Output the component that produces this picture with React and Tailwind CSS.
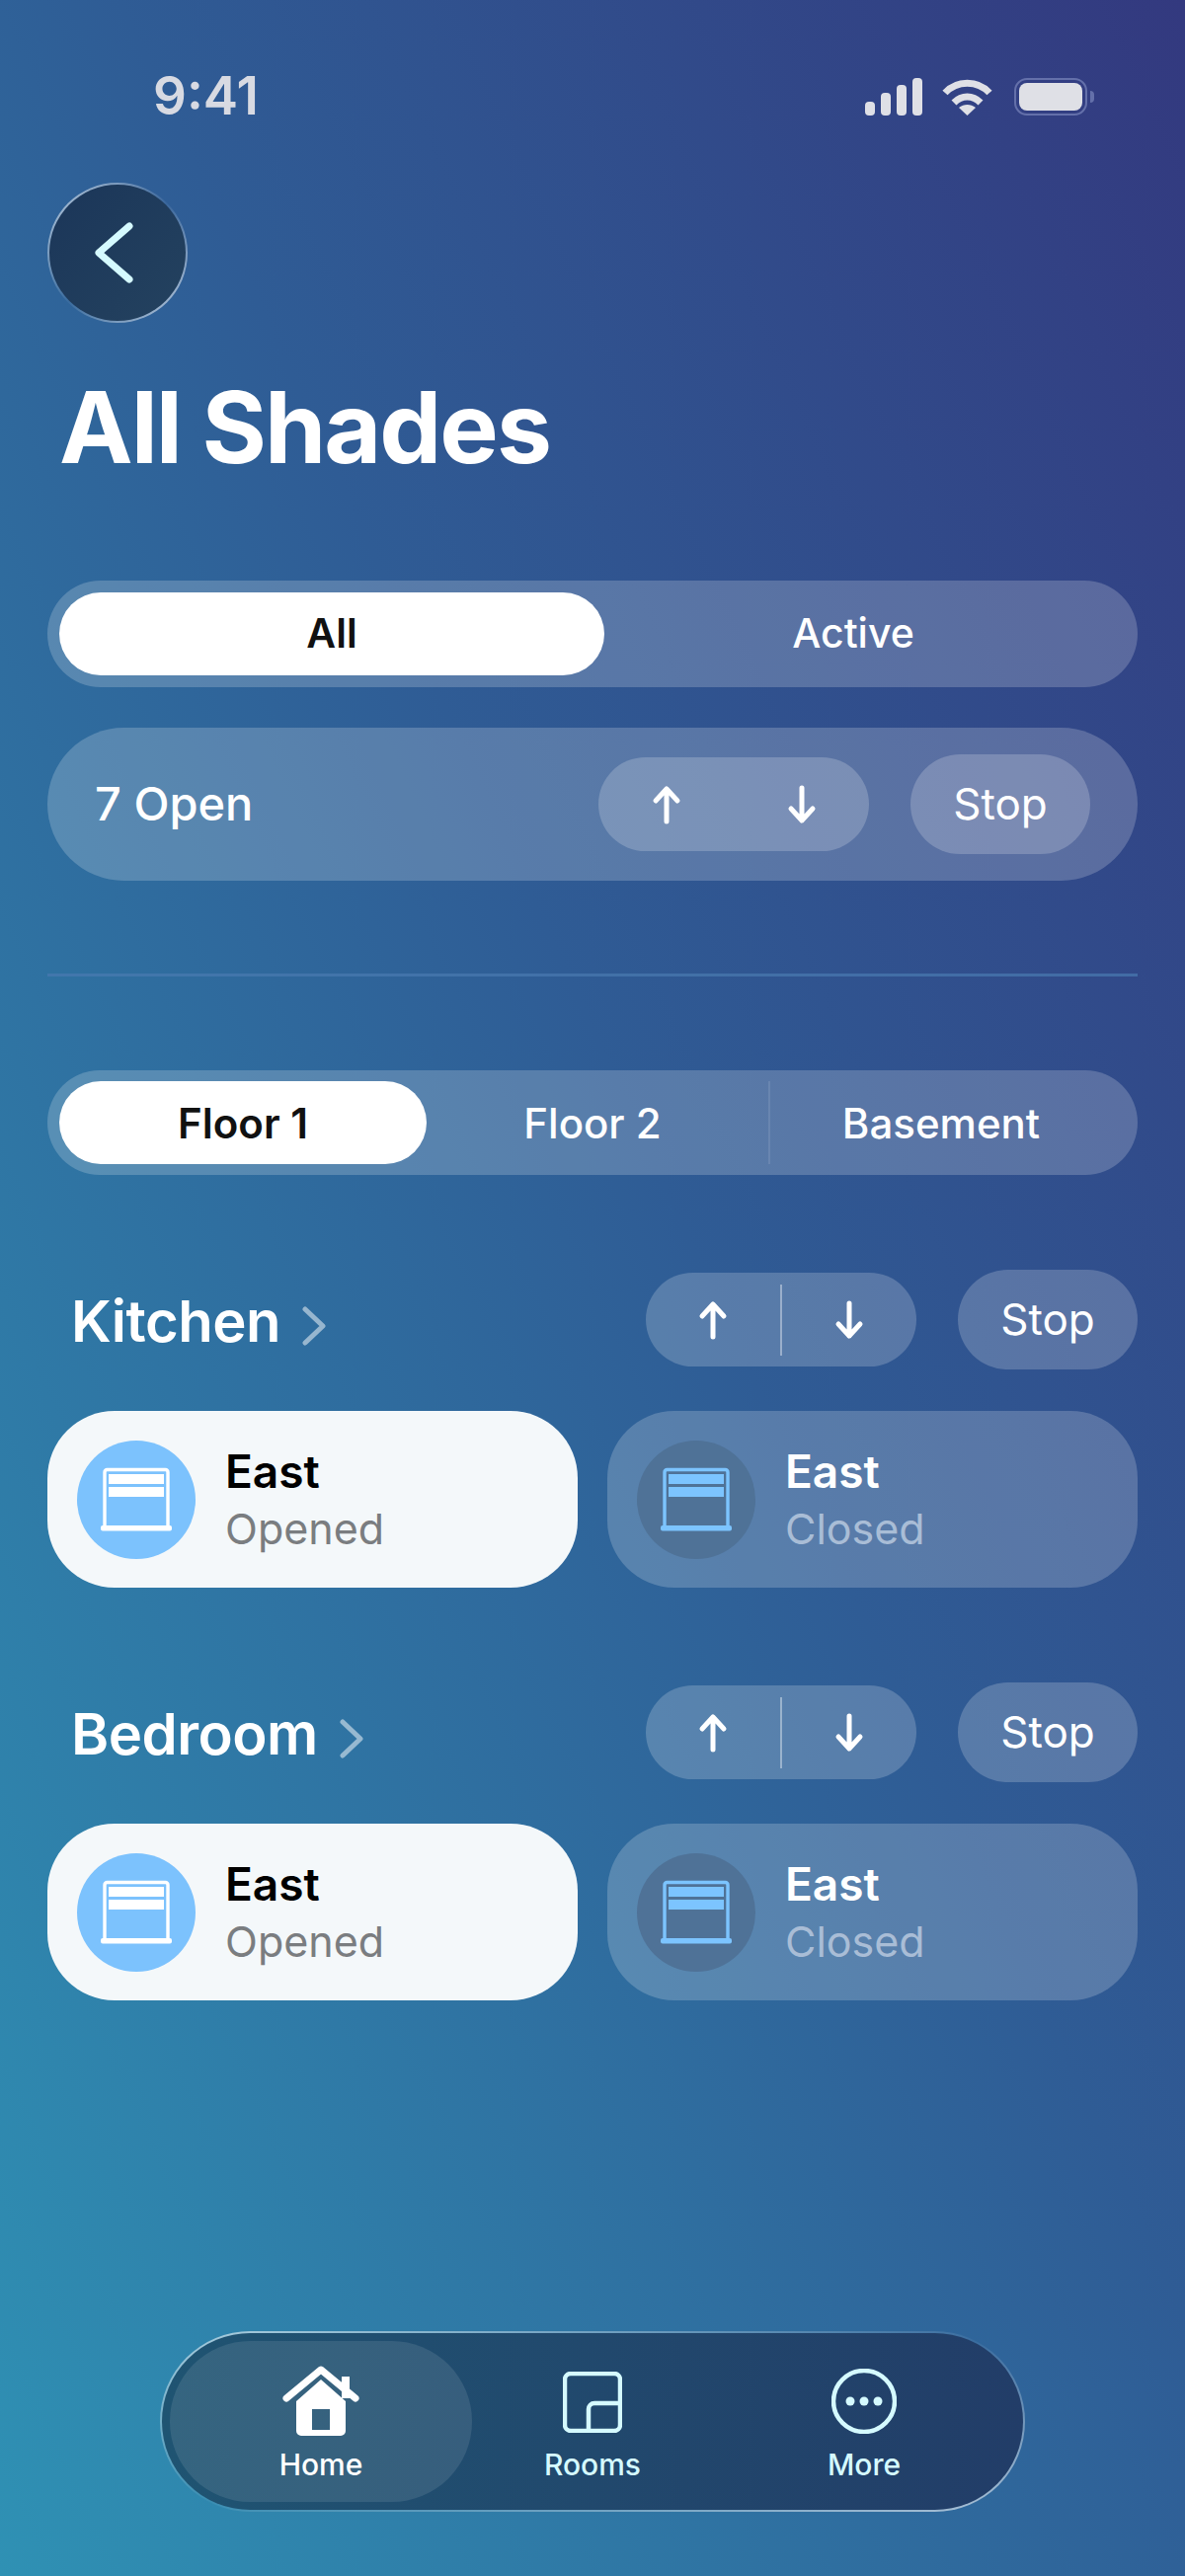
import React from "react";

// shade glyph, same drawing for open and closed cards
const ShadeIcon = ({ color }) => (
  <svg width="74" height="66" viewBox="0 0 74 66" fill="none">
    <path d="M5 59V5a2.5 2.5 0 0 1 2.5-2.5h59A2.5 2.5 0 0 1 69 5v54" stroke={color} strokeWidth="3.4" />
    <rect x="9" y="7" width="56" height="10" fill={color} />
    <rect x="9" y="20" width="56" height="10" fill={color} />
    <rect x="1" y="59" width="72" height="5.5" rx="2" fill={color} />
  </svg>
);

const ArrowUp = () => (
  <svg width="32" height="40" viewBox="0 0 32 40" fill="none" stroke="white" strokeWidth="5" strokeLinecap="round" strokeLinejoin="round">
    <path d="M16 37V4M5 16L16 4l11 12" />
  </svg>
);

const ArrowDown = () => (
  <svg width="32" height="40" viewBox="0 0 32 40" fill="none" stroke="white" strokeWidth="5" strokeLinecap="round" strokeLinejoin="round">
    <path d="M16 3v33M5 24l11 12 11-12" />
  </svg>
);

const UpDown = ({ divider }) => (
  <div className="flex h-[95px] w-[274px] items-center rounded-full bg-white/20">
    <div className="flex flex-1 justify-center">
      <ArrowUp />
    </div>
    {divider && <div className="h-[72px] w-[2px] bg-white/40" />}
    <div className="flex flex-1 justify-center">
      <ArrowDown />
    </div>
  </div>
);

const StopButton = () => (
  <div className="flex h-[101px] w-[182px] items-center justify-center rounded-full bg-white/20 pb-[2px] text-[44px] text-white">
    Stop
  </div>
);

const ShadeCard = ({ open }) => (
  <div className={`flex h-[179px] w-[537px] items-center rounded-[68px] pl-[30px] ${open ? "bg-[#f4f8fa]" : "bg-white/20"}`}>
    <div className={`flex h-[120px] w-[120px] items-center justify-center rounded-full ${open ? "bg-[#7cc2fd]" : "bg-[#4f7297]"}`}>
      <ShadeIcon color={open ? "#ffffff" : "#7cc4ff"} />
    </div>
    <div className="ml-[30px]">
      <div className={`text-[46px] leading-[58px] font-semibold ${open ? "text-black" : "text-white"}`}>East</div>
      <div className={`text-[43px] leading-[58px] ${open ? "text-[#7a7d80]" : "text-[#a9bdd6]"}`}>{open ? "Opened" : "Closed"}</div>
    </div>
  </div>
);

const Room = ({ name }) => (
  <>
    <div className="mt-[96px] flex h-[101px] items-center justify-between">
      <div className="ml-[24px] mt-[4px] flex items-center text-[58px] font-semibold tracking-[-0.5px] text-white">
        {name}
        <svg className="ml-[22px] mt-[8px]" width="24" height="40" viewBox="0 0 24 40" fill="none" stroke="white" strokeOpacity="0.5" strokeWidth="5" strokeLinecap="round" strokeLinejoin="round">
          <path d="M3 3l18 17L3 37" />
        </svg>
      </div>
      <div className="flex items-center gap-[42px]">
        <UpDown divider />
        <StopButton />
      </div>
    </div>
    <div className="mt-[42px] flex justify-between">
      <ShadeCard open />
      <ShadeCard />
    </div>
  </>
);

const App = () => {
  return (
    <div className="flex h-[2609px] w-[1200px] flex-col overflow-hidden bg-[linear-gradient(to_top_right,#2f91b4,#2f5c95_55%,#33397f)] px-12 font-[Inter,sans-serif]">
      {/* Status bar */}
      <div className="mt-[68px] flex h-[60px] items-center justify-between text-[#d8dae2]">
        <div className="ml-[107px] text-[53px] font-semibold">9:41</div>
        <div className="mr-[44px] flex items-center">
          <svg width="58" height="38" viewBox="0 0 58 38" fill="#dfe0e6">
            <rect x="0" y="24" width="10" height="14" rx="4" />
            <rect x="16" y="15" width="10" height="23" rx="4" />
            <rect x="32" y="7" width="10" height="31" rx="4" />
            <rect x="48" y="0" width="10" height="38" rx="4" />
          </svg>
          <svg className="ml-[20px]" width="51" height="37" viewBox="0 0 51 37" fill="none" stroke="#dfe0e6" strokeWidth="7">
            <path d="M3 14C15 1 36 1 48 14" />
            <path d="M12 24c8-8 19-8 27 0" />
            <path d="M25.5 37L17 29c5-4 12-4 17 0z" fill="#dfe0e6" stroke="none" />
          </svg>
          <div className="ml-[22px] flex h-[38px] w-[74px] items-center justify-center rounded-[13px] border-2 border-[#6470aa]">
            <div className="h-[28px] w-[64px] rounded-[8px] bg-[#dfe0e6]" />
          </div>
          <div className="ml-[3px] h-[12px] w-[4px] rounded-r-full bg-[#6470aa]" />
        </div>
      </div>

      {/* Back */}
      <div className="mt-[57px] h-[142px] w-[142px] rounded-full bg-gradient-to-br from-white/70 via-white/5 to-white/70 p-[2px]">
        <div className="flex h-full w-full items-center justify-center rounded-full bg-gradient-to-br from-[#1b3659] to-[#24425f] pr-[6px]">
          <svg width="42" height="62" viewBox="0 0 42 62" fill="none" stroke="#d5faff" strokeWidth="7" strokeLinecap="round" strokeLinejoin="round">
            <path d="M36 4L5 31l31 27" />
          </svg>
        </div>
      </div>

      <h1 className="mt-[46px] ml-[12px] h-[120px] text-[100px] leading-[120px] font-bold tracking-[-2px] text-white">All Shades</h1>

      {/* All / Active */}
      <div className="mt-[95px] flex h-[108px] items-center rounded-full bg-white/20 px-[12px] text-[41px] font-medium">
        <div className="flex h-[84px] w-[552px] items-center justify-center rounded-full bg-white font-semibold text-[#111]">All</div>
        <div className="flex w-[504px] justify-center text-white">Active</div>
      </div>

      {/* Summary */}
      <div className="mt-[41px] flex h-[155px] items-center justify-between rounded-full bg-white/20 px-[48px] text-white">
        <div className="text-[47px] font-medium">7 Open</div>
        <div className="flex items-center gap-[42px]">
          <UpDown />
          <StopButton />
        </div>
      </div>

      <div className="mt-[94px] h-[3px] bg-[#4a7bb0]/70" />

      {/* Floors */}
      <div className="mt-[95px] flex h-[106px] items-center rounded-full bg-white/20 px-[12px] text-[42px] font-medium text-white">
        <div className="flex h-[84px] w-[372px] items-center justify-center rounded-full bg-white font-semibold text-[#111]">Floor 1</div>
        <div className="flex w-[336px] justify-center">Floor 2</div>
        <div className="ml-[10px] h-[84px] w-[2px] bg-white/10" />
        <div className="flex w-[346px] justify-center">Basement</div>
      </div>

      <Room name="Kitchen" />
      <Room name="Bedroom" />

      {/* Tab bar */}
      <div className="mt-[335px] ml-[114px] h-[183px] w-[876px] rounded-full bg-gradient-to-br from-white/60 via-white/5 to-white/60 p-[2px]">
        <div className="flex h-full w-full items-center rounded-full bg-gradient-to-r from-[#1f5472] to-[#223d68] pl-[8px] text-[30px] font-medium text-[#d5faff]">
          <div className="flex h-[163px] w-[306px] flex-col items-center rounded-full bg-white/10 pt-[25px] text-white">
            <svg width="78" height="72" viewBox="0 0 78 72" fill="white">
              <path fillRule="evenodd" d="M39 14L14 36v30a5 5 0 0 0 5 5h40a5 5 0 0 0 5-5V36zM30 44h18v21H30z" />
              <path d="M4 33L39 4l35 29" fill="none" stroke="white" strokeWidth="7" strokeLinecap="round" strokeLinejoin="round" />
              <rect x="60" y="11" width="8" height="22" />
            </svg>
            <div className="mt-[10px] leading-[36px]">Home</div>
          </div>
          <div className="flex h-[163px] w-[244px] flex-col items-center pt-[31px]">
            <svg width="60" height="62" viewBox="0 0 60 62" fill="none" stroke="#d5faff" strokeWidth="4.5">
              <rect x="2" y="2" width="56" height="58" rx="6" />
              <path d="M26 60V38a6 6 0 0 1 6-6h26" />
            </svg>
            <div className="mt-[14px] leading-[36px]">Rooms</div>
          </div>
          <div className="flex h-[163px] w-[306px] flex-col items-center pt-[28px]">
            <svg width="66" height="66" viewBox="0 0 66 66" fill="none" stroke="#d5faff" strokeWidth="4.5">
              <circle cx="33" cy="33" r="31" />
              <circle cx="19" cy="33" r="4.5" fill="#d5faff" stroke="none" />
              <circle cx="33" cy="33" r="4.5" fill="#d5faff" stroke="none" />
              <circle cx="47" cy="33" r="4.5" fill="#d5faff" stroke="none" />
            </svg>
            <div className="mt-[13px] leading-[36px]">More</div>
          </div>
        </div>
      </div>
    </div>
  );
};

export default App;
